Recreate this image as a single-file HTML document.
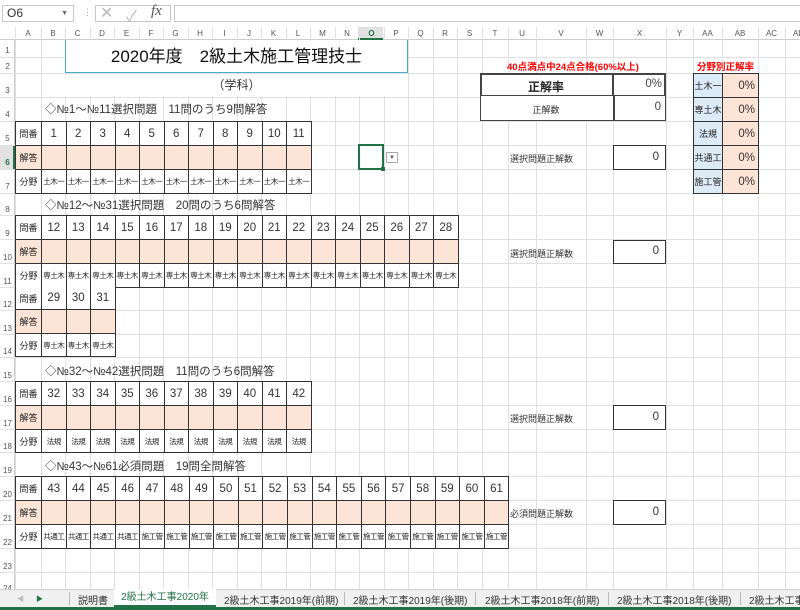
<!DOCTYPE html>
<html><head><meta charset="utf-8"><style>
*{box-sizing:border-box;margin:0;padding:0}
body{width:800px;height:610px;overflow:hidden;background:#fff;position:relative;font-family:"Liberation Sans","Noto Sans CJK JP",sans-serif;color:#222}
.ab{position:absolute}
.v{position:absolute;top:27px;height:563px;width:1px;background:#e0e0e0}
.h{position:absolute;left:0;width:800px;height:1px;background:#e0e0e0}
.ch{position:absolute;top:27px;height:13px;font-size:8px;color:#555;text-align:center;line-height:13px}
.rh{position:absolute;left:0;width:15px;font-size:8px;color:#555;text-align:center}
.blk{position:absolute;display:grid;border-left:1px solid #333;border-top:1px solid #333}
.blk>div{border-right:1px solid #333;border-bottom:1px solid #333;display:flex;align-items:center;justify-content:center;overflow:hidden;white-space:nowrap;background:#fff}
.blk .l{font-size:9px}
.blk .n{font-size:11.5px;color:#333}
.blk .a{background:#fce4d6}
.blk .f{font-size:7.5px;letter-spacing:-0.5px}
.sec{position:absolute;left:45px;font-size:11.5px;color:#333}
.box{position:absolute;border:1.5px solid #333;font-size:11.5px;text-align:right;padding-right:6px;color:#333}
.lab{position:absolute;font-size:9px;color:#333}
</style></head><body>
<div class="ab" style="left:2px;top:5px;width:72px;height:17px;border:1px solid #c6c6c6;font-size:12px;line-height:15px;padding-left:4px;color:#333">O6<span style="position:absolute;right:5px;font-size:7px;color:#666">▼</span></div>
<div class="ab" style="left:83px;top:7px;font-size:9px;color:#999">⋮</div>
<div class="ab" style="left:95px;top:5px;width:76px;height:17px;border:1px solid #c6c6c6"></div>
<div class="ab" style="left:100px;top:3px;font-size:16px;color:#bbb">✕</div>
<div class="ab" style="left:126px;top:3px;font-size:16px;color:#bbb">✓</div>
<div class="ab" style="left:151px;top:3px;font-size:15px;font-style:italic;font-family:'Liberation Serif',serif;color:#555">fx</div>
<div class="ab" style="left:174px;top:5px;width:626px;height:17px;border:1px solid #c6c6c6;border-right:none"></div>
<div class="ab" style="left:0;top:27px;width:800px;height:13px;background:#fff;border-bottom:1px solid #ccc"></div>
<div class="ab" style="left:0;top:40px;width:15px;height:550px;border-right:1px solid #ccc"></div>
<div class="ab" style="left:358px;top:27px;width:25px;height:13px;background:#e1e1e1;border-bottom:2px solid #217346"></div>
<div class="ab" style="left:0;top:145px;width:15px;height:24px;background:#e1e1e1;border-right:2px solid #217346"></div>
<div class="v" style="left:15px"></div><div class="v" style="left:41px"></div><div class="v" style="left:65px"></div><div class="v" style="left:90px"></div><div class="v" style="left:114px"></div><div class="v" style="left:139px"></div><div class="v" style="left:163px"></div><div class="v" style="left:188px"></div><div class="v" style="left:212px"></div><div class="v" style="left:237px"></div><div class="v" style="left:261px"></div><div class="v" style="left:286px"></div><div class="v" style="left:310px"></div><div class="v" style="left:335px"></div><div class="v" style="left:359px"></div><div class="v" style="left:384px"></div><div class="v" style="left:408px"></div><div class="v" style="left:433px"></div><div class="v" style="left:457px"></div><div class="v" style="left:482px"></div><div class="v" style="left:508px"></div><div class="v" style="left:536px"></div><div class="v" style="left:586px"></div><div class="v" style="left:613px"></div><div class="v" style="left:666px"></div><div class="v" style="left:693px"></div><div class="v" style="left:722px"></div><div class="v" style="left:758px"></div><div class="v" style="left:785px"></div>
<div class="h" style="top:57px"></div><div class="h" style="top:73px"></div><div class="h" style="top:97px"></div><div class="h" style="top:121px"></div><div class="h" style="top:145px"></div><div class="h" style="top:169px"></div><div class="h" style="top:193px"></div><div class="h" style="top:215px"></div><div class="h" style="top:239px"></div><div class="h" style="top:263px"></div><div class="h" style="top:287px"></div><div class="h" style="top:310px"></div><div class="h" style="top:334px"></div><div class="h" style="top:357px"></div><div class="h" style="top:381px"></div><div class="h" style="top:405px"></div><div class="h" style="top:429px"></div><div class="h" style="top:452px"></div><div class="h" style="top:476px"></div><div class="h" style="top:500px"></div><div class="h" style="top:524px"></div><div class="h" style="top:548px"></div><div class="h" style="top:572px"></div>
<div class="ch" style="left:15px;width:26px">A</div><div class="ch" style="left:41px;width:24px">B</div><div class="ch" style="left:65px;width:25px">C</div><div class="ch" style="left:90px;width:24px">D</div><div class="ch" style="left:114px;width:25px">E</div><div class="ch" style="left:139px;width:24px">F</div><div class="ch" style="left:163px;width:25px">G</div><div class="ch" style="left:188px;width:24px">H</div><div class="ch" style="left:212px;width:25px">I</div><div class="ch" style="left:237px;width:24px">J</div><div class="ch" style="left:261px;width:25px">K</div><div class="ch" style="left:286px;width:24px">L</div><div class="ch" style="left:310px;width:25px">M</div><div class="ch" style="left:335px;width:24px">N</div><div class="ch" style="left:359px;width:25px;color:#217346;font-weight:bold">O</div><div class="ch" style="left:384px;width:24px">P</div><div class="ch" style="left:408px;width:25px">Q</div><div class="ch" style="left:433px;width:24px">R</div><div class="ch" style="left:457px;width:25px">S</div><div class="ch" style="left:482px;width:26px">T</div><div class="ch" style="left:508px;width:28px">U</div><div class="ch" style="left:536px;width:50px">V</div><div class="ch" style="left:586px;width:27px">W</div><div class="ch" style="left:613px;width:53px">X</div><div class="ch" style="left:666px;width:27px">Y</div><div class="ch" style="left:693px;width:29px">AA</div><div class="ch" style="left:722px;width:36px">AB</div><div class="ch" style="left:758px;width:27px">AC</div><div class="ch" style="left:785px;width:27px">AD</div>
<div class="rh" style="top:46px">1</div><div class="rh" style="top:62px">2</div><div class="rh" style="top:86px">3</div><div class="rh" style="top:110px">4</div><div class="rh" style="top:134px">5</div><div class="rh" style="top:158px;color:#217346;font-weight:bold">6</div><div class="rh" style="top:182px">7</div><div class="rh" style="top:205px">8</div><div class="rh" style="top:229px">9</div><div class="rh" style="top:253px">10</div><div class="rh" style="top:277px">11</div><div class="rh" style="top:300px">12</div><div class="rh" style="top:324px">13</div><div class="rh" style="top:347px">14</div><div class="rh" style="top:371px">15</div><div class="rh" style="top:395px">16</div><div class="rh" style="top:419px">17</div><div class="rh" style="top:442px">18</div><div class="rh" style="top:466px">19</div><div class="rh" style="top:490px">20</div><div class="rh" style="top:514px">21</div><div class="rh" style="top:538px">22</div><div class="rh" style="top:562px">23</div><div class="rh" style="top:584px">24</div>
<div class="ab" style="left:65px;top:40px;width:343px;height:33px;background:#fff;border:1.5px solid #4bacc6;border-top:none;font-size:17px;text-align:center;line-height:33px;color:#111">2020年度　2級土木施工管理技士</div>
<div class="ab" style="left:65px;top:74px;width:343px;height:22px;background:#fff;font-size:12px;text-align:center;line-height:22px;color:#333">（学科）</div>
<div class="sec" style="top:101px">◇№1～№11選択問題　11問のうち9問解答</div>
<div class="sec" style="top:197px">◇№12～№31選択問題　20問のうち6問解答</div>
<div class="sec" style="top:363px">◇№32～№42選択問題　11問のうち6問解答</div>
<div class="sec" style="top:458px">◇№43～№61必須問題　19問全問解答</div>
<div class="blk" style="left:15px;top:121px;grid-template-columns:26px repeat(11,24.5px);grid-template-rows:24px 24px 24px">
<div class="l">問番</div><div class="n">1</div><div class="n">2</div><div class="n">3</div><div class="n">4</div><div class="n">5</div><div class="n">6</div><div class="n">7</div><div class="n">8</div><div class="n">9</div><div class="n">10</div><div class="n">11</div>
<div class="l a">解答</div><div class="a"></div><div class="a"></div><div class="a"></div><div class="a"></div><div class="a"></div><div class="a"></div><div class="a"></div><div class="a"></div><div class="a"></div><div class="a"></div><div class="a"></div>
<div class="l">分野</div><div class="f">土木一</div><div class="f">土木一</div><div class="f">土木一</div><div class="f">土木一</div><div class="f">土木一</div><div class="f">土木一</div><div class="f">土木一</div><div class="f">土木一</div><div class="f">土木一</div><div class="f">土木一</div><div class="f">土木一</div>
</div>
<div class="blk" style="left:15px;top:215px;grid-template-columns:26px repeat(17,24.5px);grid-template-rows:24px 24px 24px">
<div class="l">問番</div><div class="n">12</div><div class="n">13</div><div class="n">14</div><div class="n">15</div><div class="n">16</div><div class="n">17</div><div class="n">18</div><div class="n">19</div><div class="n">20</div><div class="n">21</div><div class="n">22</div><div class="n">23</div><div class="n">24</div><div class="n">25</div><div class="n">26</div><div class="n">27</div><div class="n">28</div>
<div class="l a">解答</div><div class="a"></div><div class="a"></div><div class="a"></div><div class="a"></div><div class="a"></div><div class="a"></div><div class="a"></div><div class="a"></div><div class="a"></div><div class="a"></div><div class="a"></div><div class="a"></div><div class="a"></div><div class="a"></div><div class="a"></div><div class="a"></div><div class="a"></div>
<div class="l">分野</div><div class="f">専土木</div><div class="f">専土木</div><div class="f">専土木</div><div class="f">専土木</div><div class="f">専土木</div><div class="f">専土木</div><div class="f">専土木</div><div class="f">専土木</div><div class="f">専土木</div><div class="f">専土木</div><div class="f">専土木</div><div class="f">専土木</div><div class="f">専土木</div><div class="f">専土木</div><div class="f">専土木</div><div class="f">専土木</div><div class="f">専土木</div>
</div>
<div class="blk" style="left:15px;top:287px;border-top:none;grid-template-columns:26px repeat(3,24.5px);grid-template-rows:23px 24px 23px">
<div class="l">問番</div><div class="n">29</div><div class="n">30</div><div class="n">31</div>
<div class="l a">解答</div><div class="a"></div><div class="a"></div><div class="a"></div>
<div class="l">分野</div><div class="f">専土木</div><div class="f">専土木</div><div class="f">専土木</div>
</div>
<div class="blk" style="left:15px;top:381px;grid-template-columns:26px repeat(11,24.5px);grid-template-rows:24px 24px 23px">
<div class="l">問番</div><div class="n">32</div><div class="n">33</div><div class="n">34</div><div class="n">35</div><div class="n">36</div><div class="n">37</div><div class="n">38</div><div class="n">39</div><div class="n">40</div><div class="n">41</div><div class="n">42</div>
<div class="l a">解答</div><div class="a"></div><div class="a"></div><div class="a"></div><div class="a"></div><div class="a"></div><div class="a"></div><div class="a"></div><div class="a"></div><div class="a"></div><div class="a"></div><div class="a"></div>
<div class="l">分野</div><div class="f">法規</div><div class="f">法規</div><div class="f">法規</div><div class="f">法規</div><div class="f">法規</div><div class="f">法規</div><div class="f">法規</div><div class="f">法規</div><div class="f">法規</div><div class="f">法規</div><div class="f">法規</div>
</div>
<div class="blk" style="left:15px;top:476px;grid-template-columns:26px repeat(19,24.6px);grid-template-rows:24px 24px 24px">
<div class="l">問番</div><div class="n">43</div><div class="n">44</div><div class="n">45</div><div class="n">46</div><div class="n">47</div><div class="n">48</div><div class="n">49</div><div class="n">50</div><div class="n">51</div><div class="n">52</div><div class="n">53</div><div class="n">54</div><div class="n">55</div><div class="n">56</div><div class="n">57</div><div class="n">58</div><div class="n">59</div><div class="n">60</div><div class="n">61</div>
<div class="l a">解答</div><div class="a"></div><div class="a"></div><div class="a"></div><div class="a"></div><div class="a"></div><div class="a"></div><div class="a"></div><div class="a"></div><div class="a"></div><div class="a"></div><div class="a"></div><div class="a"></div><div class="a"></div><div class="a"></div><div class="a"></div><div class="a"></div><div class="a"></div><div class="a"></div><div class="a"></div>
<div class="l">分野</div><div class="f">共通工</div><div class="f">共通工</div><div class="f">共通工</div><div class="f">共通工</div><div class="f">施工管</div><div class="f">施工管</div><div class="f">施工管</div><div class="f">施工管</div><div class="f">施工管</div><div class="f">施工管</div><div class="f">施工管</div><div class="f">施工管</div><div class="f">施工管</div><div class="f">施工管</div><div class="f">施工管</div><div class="f">施工管</div><div class="f">施工管</div><div class="f">施工管</div><div class="f">施工管</div>
</div>
<div class="ab" style="left:358px;top:144px;width:26px;height:26px;border:2px solid #217346;background:#fff"></div>
<div class="ab" style="left:381px;top:167px;width:4px;height:4px;background:#217346"></div>
<div class="ab" style="left:386px;top:152px;width:12px;height:11px;border:1px solid #aaa;background:#fff;font-size:6px;text-align:center;line-height:10px;color:#555">▼</div>
<div class="ab" style="left:486px;top:59px;width:174px;text-align:center;font-size:9.5px;font-weight:bold;color:#f00">40点満点中24点合格(60%以上)</div>
<div class="ab" style="left:480px;top:73px;width:186px;height:24px;border:2px solid #444;background:#fff"></div>
<div class="ab" style="left:612px;top:73px;width:2px;height:24px;background:#444"></div>
<div class="ab" style="left:480px;top:78px;width:132px;text-align:center;font-size:12px;font-weight:bold;color:#222">正解率</div>
<div class="ab" style="left:614px;top:78px;width:50px;text-align:right;font-size:11.5px;color:#444;padding-right:2px">0%</div>
<div class="ab" style="left:480px;top:96px;width:186px;height:25px;border:1.5px solid #444;border-top:none;background:#fff"></div>
<div class="ab" style="left:613px;top:96px;width:1.5px;height:25px;background:#444"></div>
<div class="ab" style="left:480px;top:103px;width:132px;text-align:center;font-size:9px;color:#333">正解数</div>
<div class="ab" style="left:614px;top:101px;width:50px;text-align:right;font-size:11.5px;color:#444;padding-right:3px">0</div>
<div class="lab" style="left:510px;top:152px">選択問題正解数</div>
<div class="box" style="left:613px;top:145px;width:53px;height:25px;line-height:22px">0</div>
<div class="lab" style="left:510px;top:247px">選択問題正解数</div>
<div class="box" style="left:613px;top:240px;width:53px;height:24px;line-height:21px">0</div>
<div class="lab" style="left:510px;top:412px">選択問題正解数</div>
<div class="box" style="left:613px;top:405px;width:53px;height:25px;line-height:22px">0</div>
<div class="lab" style="left:510px;top:507px">必須問題正解数</div>
<div class="box" style="left:613px;top:500px;width:53px;height:25px;line-height:22px">0</div>
<div class="ab" style="left:693px;top:59px;width:65px;text-align:center;font-size:9.5px;font-weight:bold;color:#f00">分野別正解率</div>
<div class="blk" style="left:693px;top:73px;grid-template-columns:29px 36px;grid-template-rows:24px 24px 24px 24px 24px">
<div class="l" style="background:#ddebf7">土木一</div><div class="n a" style="justify-content:flex-end;padding-right:3px">0%</div>
<div class="l" style="background:#ddebf7">専土木</div><div class="n a" style="justify-content:flex-end;padding-right:3px">0%</div>
<div class="l" style="background:#ddebf7">法規</div><div class="n a" style="justify-content:flex-end;padding-right:3px">0%</div>
<div class="l" style="background:#ddebf7">共通工</div><div class="n a" style="justify-content:flex-end;padding-right:3px">0%</div>
<div class="l" style="background:#ddebf7">施工管</div><div class="n a" style="justify-content:flex-end;padding-right:3px">0%</div>
</div>
<div class="ab" style="left:0;top:589px;width:800px;height:21px;background:#f0f0f0;border-top:1px solid #d0d0d0"></div>
<div class="ab" style="left:0;top:607px;width:800px;height:3px;background:#217346"></div>
<div class="ab" style="left:17px;top:594px;font-size:7px;color:#bbb">◀</div>
<div class="ab" style="left:36px;top:594px;font-size:7px;color:#217346">▶</div>
<div class="ab" style="left:69px;top:592px;width:1px;height:13px;background:#bbb"></div>
<div class="ab" style="left:78px;top:592px;font-size:10px;color:#333">説明書</div>
<div class="ab" style="left:114px;top:589px;width:102px;height:18px;background:#fff;border-bottom:2px solid #217346;font-size:10px;color:#217346;text-align:center;line-height:17px">2級土木工事2020年</div>
<div class="ab" style="left:224px;top:592px;font-size:10px;color:#333">2級土木工事2019年(前期)</div>
<div class="ab" style="left:344px;top:592px;width:1px;height:13px;background:#bbb"></div>
<div class="ab" style="left:353px;top:592px;font-size:10px;color:#333">2級土木工事2019年(後期)</div>
<div class="ab" style="left:475px;top:592px;width:1px;height:13px;background:#bbb"></div>
<div class="ab" style="left:485px;top:592px;font-size:10px;color:#333">2級土木工事2018年(前期)</div>
<div class="ab" style="left:608px;top:592px;width:1px;height:13px;background:#bbb"></div>
<div class="ab" style="left:617px;top:592px;font-size:10px;color:#333">2級土木工事2018年(後期)</div>
<div class="ab" style="left:740px;top:592px;width:1px;height:13px;background:#bbb"></div>
<div class="ab" style="left:749px;top:592px;font-size:10px;color:#333;white-space:nowrap">2級土木工事</div>
</body></html>
